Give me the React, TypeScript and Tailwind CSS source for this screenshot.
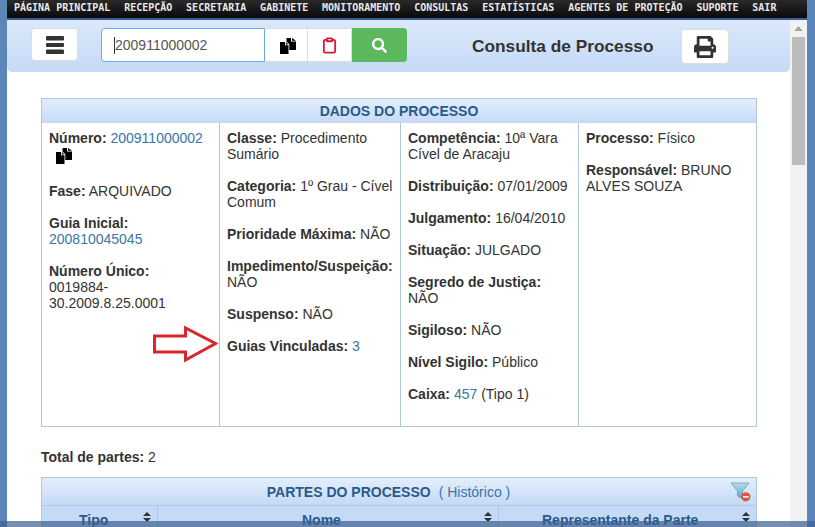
import { ReactNode } from 'react';
import { Clipboard } from 'lucide-react';
import { FaPrint, FaSearch } from 'react-icons/fa';

const menu = ['PÁGINA PRINCIPAL', 'RECEPÇÃO', 'SECRETARIA', 'GABINETE', 'MONITORAMENTO', 'CONSULTAS', 'ESTATÍSTICAS', 'AGENTES DE PROTEÇÃO', 'SUPORTE', 'SAIR'];

function CopyIcon({ className }: { className?: string }) {
  return (
    <svg viewBox="0 0 16 16" className={className} fill="#000">
      <path d="M0 4h5v3.300h3.500V16H0z" />
      <path d="M5.800 4 8.500 6.600H5.800z" />
      <path d="M6.500 0H11v3.500h5V12H9.300V6.200L6.500 3.400z" />
      <path d="M12 0l4 2.800h-4z" />
    </svg>
  );
}

function Sort() {
  return (
    <svg viewBox="0 0 8 10" className="h-[10px] w-[8px]" fill="#333">
      <path d="M4 0 8 4H0zM4 10 0 6h8z" />
    </svg>
  );
}

function Field({ label, children }: { label: string; children?: ReactNode }) {
  return (
    <div className="mb-4">
      <b className="font-bold">{label}:</b> {children}
    </div>
  );
}

const Lnk = ({ children }: { children: ReactNode }) => <a className="text-[#3b75a8]">{children}</a>;

function Column({ width, children }: { width: string; children: ReactNode }) {
  return <div className={`${width} border-r border-[#b0c8d8] pl-[7px] pr-[6px] pt-[7px] last:border-r-0`}>{children}</div>;
}

export default function App() {
  return (
    <div className="relative flex h-[527px] w-[815px] overflow-hidden bg-[#5b86b8] font-['Liberation_Sans',sans-serif] text-[14px] leading-4 text-[#333]">
      <div className="ml-[7px] mr-[8px] flex h-full w-[800px] flex-col bg-white">
        <nav className="flex h-[20px] shrink-0 items-start gap-[13.800px] border-b-2 border-[#3a5f96] bg-gradient-to-b from-[#2a2a2a] to-[#0a0a0a] pl-[7px] pt-[1px] font-['DejaVu_Sans_Mono',monospace] text-[10px] font-bold leading-[14px] text-[#e8e8e8]">
          {menu.map(m => (
            <span key={m} className="whitespace-nowrap">{m}</span>
          ))}
        </nav>

        <div className="flex min-h-0 flex-1">
          <div className="w-[783px] shrink-0">
            <header className="flex h-[52px] items-start rounded-b-[5px] bg-gradient-to-b from-[#dbe8f9] to-[#c5daf7] pl-[24px] pt-[8px]">
              <button className="flex h-[33px] w-[47px] items-center justify-center rounded-[4px] border border-[#ddd] bg-white">
                <svg viewBox="0 0 18 18" className="h-[18px] w-[18px]" fill="#333">
                  <rect y="0" width="18" height="4.500" rx="1" />
                  <rect y="7" width="18" height="4" rx="1" />
                  <rect y="13.500" width="18" height="4.500" rx="1" />
                </svg>
              </button>
              <div className="ml-[23px] flex h-[34px]">
                <div className="flex w-[164px] items-center rounded-l-[4px] border border-[#66afe9] bg-white pl-[12px] text-[14px] text-[#555]">
                  <span className="h-[17px] w-px bg-[#333]" />
                  200911000002
                </div>
                <button className="flex w-[43px] items-center justify-center border-y border-r border-[#ddd] bg-white pl-[4px] pt-[2px]">
                  <CopyIcon className="h-[16px] w-[16px]" />
                </button>
                <button className="flex w-[44px] items-center justify-center border-y border-r border-[#ddd] bg-white">
                  <Clipboard size={17} color="#dc143c" strokeWidth={2.5} />
                </button>
                <button className="flex w-[55px] items-center justify-center rounded-r-[4px] bg-[#5cb85c] text-white">
                  <FaSearch size={15} />
                </button>
              </div>
              <h1 className="ml-[65px] mt-[9px] w-[181px] whitespace-nowrap text-[17.300px] font-bold leading-[18px] text-[#333]">Consulta de Processo</h1>
              <button className="ml-[28px] mt-[1px] flex h-[35px] w-[48px] items-center justify-center rounded-[4px] border border-[#ddd] bg-white text-[#333]">
                <FaPrint size={22} />
              </button>
            </header>

            <main className="pl-[34px] pr-[33px] pt-[26px]">
              <section className="h-[329px] border border-[#b0c8d8]">
                <div className="flex h-[24px] items-center justify-center bg-gradient-to-b from-[#e3eefb] to-[#c5daf7] text-[14px] font-bold text-[#2a5a8a]">
                  DADOS DO PROCESSO
                </div>
                <div className="flex h-[303px]">
                  <Column width="w-[178px]">
                    <div className="mb-[19px]">
                      <b>Número:</b> <Lnk>200911000002</Lnk>
                      <CopyIcon className="ml-[7px] mt-[2px] block h-[16px] w-[16px]" />
                    </div>
                    <Field label="Fase">ARQUIVADO</Field>
                    <Field label="Guia Inicial"><br /><Lnk>200810045045</Lnk></Field>
                    <Field label="Número Único"><br />0019884-<br />30.2009.8.25.0001</Field>
                  </Column>
                  <Column width="w-[181px]">
                    <Field label="Classe">Procedimento Sumário</Field>
                    <Field label="Categoria">1º Grau - Cível Comum</Field>
                    <Field label="Prioridade Máxima">NÃO</Field>
                    <Field label="Impedimento/Suspeição">NÃO</Field>
                    <Field label="Suspenso">NÃO</Field>
                    <Field label="Guias Vinculadas"><Lnk>3</Lnk></Field>
                  </Column>
                  <Column width="w-[178px]">
                    <Field label="Competência">10ª Vara Cível de Aracaju</Field>
                    <Field label="Distribuição">07/01/2009</Field>
                    <Field label="Julgamento">16/04/2010</Field>
                    <Field label="Situação">JULGADO</Field>
                    <Field label="Segredo de Justiça">NÃO</Field>
                    <Field label="Sigiloso">NÃO</Field>
                    <Field label="Nível Sigilo">Público</Field>
                    <Field label="Caixa"><Lnk>457</Lnk> (Tipo 1)</Field>
                  </Column>
                  <Column width="flex-1">
                    <Field label="Processo">Físico</Field>
                    <Field label="Responsável">BRUNO ALVES SOUZA</Field>
                  </Column>
                </div>
              </section>

              <div className="mt-[22px]"><b>Total de partes:</b> 2</div>

              <section className="mt-[12px] border border-[#b0c8d8]">
                <div className="relative flex h-[28px] items-center justify-center border-b border-[#b0c8d8] bg-gradient-to-b from-[#e3eefb] to-[#c5daf7] pr-[21px] font-bold text-[#2a5a8a]">
                  PARTES DO PROCESSO
                  <span className="ml-[8px] font-normal text-[#3b75a8]">( Histórico )</span>
                  <svg viewBox="0 0 20 20" className="absolute right-[5px] top-[4px] h-[20px] w-[20px]">
                    <defs>
                      <linearGradient id="funil" x1="0" y1="0" x2="0" y2="1">
                        <stop offset="0" stopColor="#b8dcec" />
                        <stop offset="1" stopColor="#5aa0cc" />
                      </linearGradient>
                    </defs>
                    <path d="M0 1h18l-6.500 8v8l-5-3V9z" fill="url(#funil)" stroke="#6a9cbc" strokeWidth=".8" />
                    <circle cx="14.800" cy="14.800" r="4.600" fill="#e2533e" />
                    <rect x="12" y="14" width="5.600" height="1.600" fill="#fff" />
                  </svg>
                </div>
                <div className="flex h-[30px] bg-[#c5daf7] font-bold text-[#2a5a8a]">
                  <div className="flex w-[116px] items-start justify-between border-r border-[#b0c8d8] pl-[37px] pr-[6px] pt-[6px]">Tipo<Sort /></div>
                  <div className="flex w-[341px] items-start justify-between border-r border-[#b0c8d8] pl-[144px] pr-[6px] pt-[6px]">Nome<Sort /></div>
                  <div className="flex flex-1 items-start justify-between pl-[43px] pr-[6px] pt-[6px]">Representante da Parte<Sort /></div>
                </div>
              </section>
            </main>
          </div>

          {/* barra de rolagem */}
          <div className="flex w-[17px] shrink-0 flex-col items-center bg-[#f1f1f1]">
            <svg viewBox="0 0 10 6" className="mt-[6px] h-[5px] w-[9px]" fill="#a3a3a3"><path d="M5 0l5 6H0z" /></svg>
            <div className="mt-[6px] h-[128px] w-[13px] bg-[#bcbcbc]" />
          </div>
        </div>
      </div>

      {/* seta vermelha sobre o conteúdo */}
      <svg viewBox="0 0 68 38" className="absolute left-[152px] top-[325px] h-[38px] w-[68px]" fill="#fff" stroke="#d9252b" strokeWidth="3">
        <path d="M2.500 11h31V3l30 15.500L33.500 35v-8h-31z" />
      </svg>

      <div className="absolute bottom-0 left-0 h-[6px] w-full bg-[#3a5f8f]/70" />
    </div>
  );
}
